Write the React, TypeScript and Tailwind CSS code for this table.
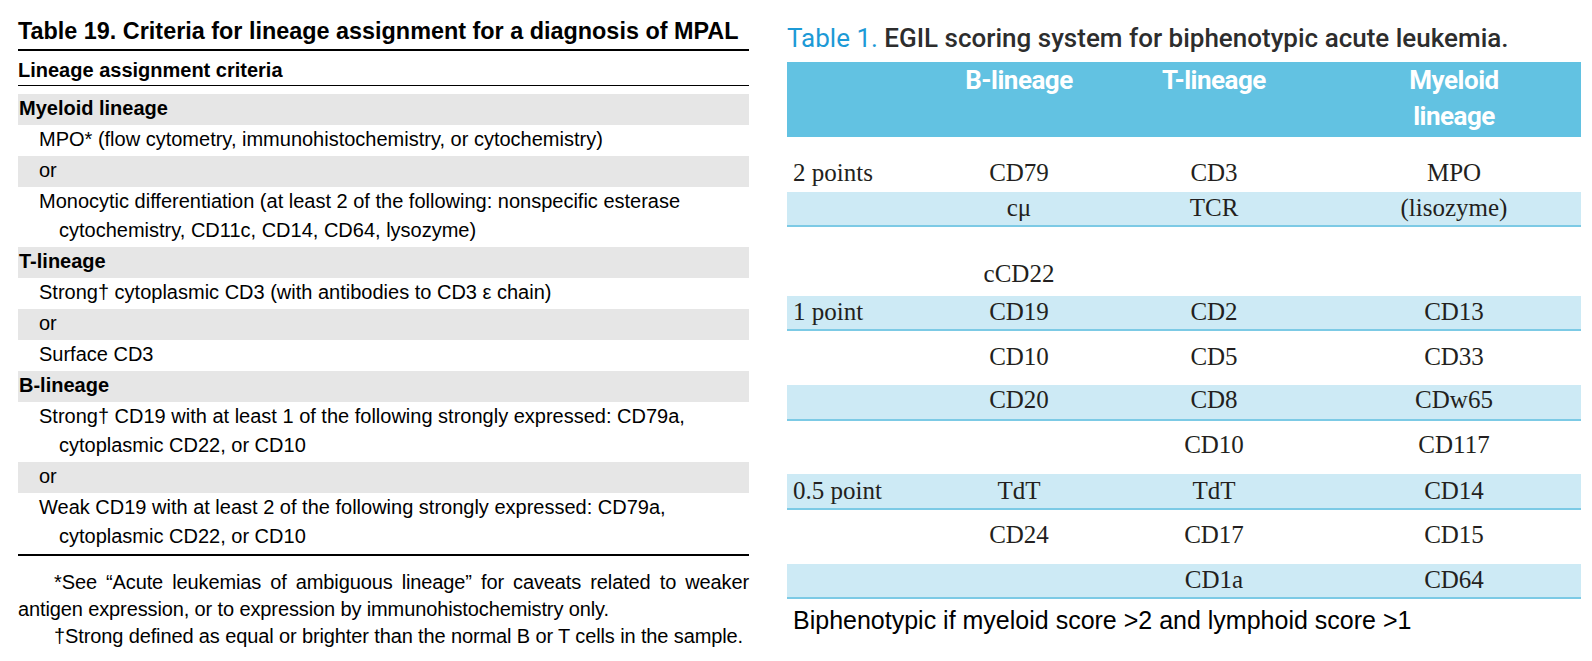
import React from 'react';

type Row = { kind: 'head' | 'sub'; lines: string[] };

const criteria: Row[] = [
  { kind: 'head', lines: ['Myeloid lineage'] },
  { kind: 'sub', lines: ['MPO* (flow cytometry, immunohistochemistry, or cytochemistry)'] },
  { kind: 'sub', lines: ['or'] },
  {
    kind: 'sub',
    lines: [
      'Monocytic differentiation (at least 2 of the following: nonspecific esterase',
      'cytochemistry, CD11c, CD14, CD64, lysozyme)',
    ],
  },
  { kind: 'head', lines: ['T-lineage'] },
  { kind: 'sub', lines: ['Strong\u2020 cytoplasmic CD3 (with antibodies to CD3 \u03b5 chain)'] },
  { kind: 'sub', lines: ['or'] },
  { kind: 'sub', lines: ['Surface CD3'] },
  { kind: 'head', lines: ['B-lineage'] },
  {
    kind: 'sub',
    lines: [
      'Strong\u2020 CD19 with at least 1 of the following strongly expressed: CD79a,',
      'cytoplasmic CD22, or CD10',
    ],
  },
  { kind: 'sub', lines: ['or'] },
  {
    kind: 'sub',
    lines: [
      'Weak CD19 with at least 2 of the following strongly expressed: CD79a,',
      'cytoplasmic CD22, or CD10',
    ],
  },
];

// egil rows: [label, B, T, myeloid], plus row box classes
const egil = [
  { cells: ['2 points', 'CD79', 'CD3', 'MPO'], box: 'h-[55px] pt-[21px]' },
  { cells: ['', 'c\u03bc', 'TCR', '(lisozyme)'], box: 'h-[35px] pt-[1px] bg-[#cdeaf5] border-b-2 border-[#7ccae5]' },
  { cells: ['', 'cCD22', '', ''], box: 'h-[69px] pt-[32px]' },
  { cells: ['1 point', 'CD19', 'CD2', 'CD13'], box: 'h-[35px] pt-[1px] bg-[#cdeaf5] border-b-2 border-[#7ccae5]' },
  { cells: ['', 'CD10', 'CD5', 'CD33'], box: 'h-[54px] pt-[11px]' },
  { cells: ['', 'CD20', 'CD8', 'CDw65'], box: 'h-[36px] pt-0 bg-[#cdeaf5] border-b-2 border-[#7ccae5]' },
  { cells: ['', '', 'CD10', 'CD117'], box: 'h-[53px] pt-[9px]' },
  { cells: ['0.5 point', 'TdT', 'TdT', 'CD14'], box: 'h-[36px] pt-[2px] bg-[#cdeaf5] border-b-2 border-[#7ccae5]' },
  { cells: ['', 'CD24', 'CD17', 'CD15'], box: 'h-[54px] pt-[10px]' },
  { cells: ['', '', 'CD1a', 'CD64'], box: 'h-[35px] pt-[1px] bg-[#cdeaf5] border-b-2 border-[#7ccae5]' },
];

const cols = 'grid grid-cols-[150px_164px_226px_254px]';

const App: any = () => {
  return (
    <div className="flex w-[1592px] h-[661px] bg-white text-black overflow-hidden">
      {/* left: Table 19 */}
      <section className="ml-[18px] w-[731px] pt-[18px] font-['Liberation_Sans',Arial,sans-serif]">
        <h2 className="text-[23.4px] leading-[27px] font-bold whitespace-nowrap">
          Table 19. Criteria for lineage assignment for a diagnosis of MPAL
        </h2>
        <div className="mt-[4px] h-[2px] bg-black" />
        <div className="pt-[4px] text-[20px] leading-[30px] font-bold">Lineage assignment criteria</div>
        <div className="h-px bg-black" />
        <div className="mt-[8px]">
          {criteria.map((row, i) => (
            <div
              key={i}
              className={`pb-[2px] text-[20px] leading-[29px] ${i % 2 === 0 ? 'bg-[#e6e6e6]' : ''}`}
            >
              {row.lines.map((line, j) => (
                <div
                  key={j}
                  className={
                    row.kind === 'head' ? 'pl-[1px] font-bold' : j === 0 ? 'pl-[21px]' : 'pl-[41px]'
                  }
                >
                  {line}
                </div>
              ))}
            </div>
          ))}
        </div>
        <div className="mt-[1px] h-[2px] bg-black" />
        <div className="mt-[13px] text-[20px] leading-[27px] text-justify tracking-[-0.12px]">
          <p className="indent-[36px]">
            *See &ldquo;Acute leukemias of ambiguous lineage&rdquo; for caveats related to weaker antigen
            expression, or to expression by immunohistochemistry only.
          </p>
          <p className="indent-[36px]">
            {'\u2020'}Strong defined as equal or brighter than the normal B or T cells in the sample.
          </p>
        </div>
      </section>

      {/* right: Table 1 EGIL */}
      <section className="ml-[38px] w-[794px] pt-[22px]">
        <h2 className="text-[26px] leading-[32px] font-['Roboto',sans-serif] whitespace-nowrap">
          <span className="text-[#1c9ad6]">Table 1. </span>
          <span className="font-medium text-[#2d2d2d]">EGIL scoring system for biphenotypic acute leukemia.</span>
        </h2>
        <div
          className={`${cols} mt-[8px] h-[75px] bg-[#62c2e2] text-white font-['Roboto',sans-serif] font-bold text-[26px] leading-[36px] tracking-[-0.5px] text-center`}
        >
          <div />
          <div>B-lineage</div>
          <div>T-lineage</div>
          <div>
            Myeloid
            <br />
            lineage
          </div>
        </div>
        <div className="font-['Liberation_Serif','Times_New_Roman',serif] text-[25px] leading-[30px] text-[#231f20]">
          {egil.map((r, i) => (
            <div key={i} className={`${cols} ${r.box}`}>
              <div className="pl-[6px]">{r.cells[0]}</div>
              <div className="text-center">{r.cells[1]}</div>
              <div className="text-center">{r.cells[2]}</div>
              <div className="text-center">{r.cells[3]}</div>
            </div>
          ))}
        </div>
        <div className="mt-[6px] pl-[6px] font-['Liberation_Sans',Arial,sans-serif] text-[25px] leading-[30px]">
          Biphenotypic if myeloid score &gt;2 and lymphoid score &gt;1
        </div>
      </section>
    </div>
  );
};

export default App;
